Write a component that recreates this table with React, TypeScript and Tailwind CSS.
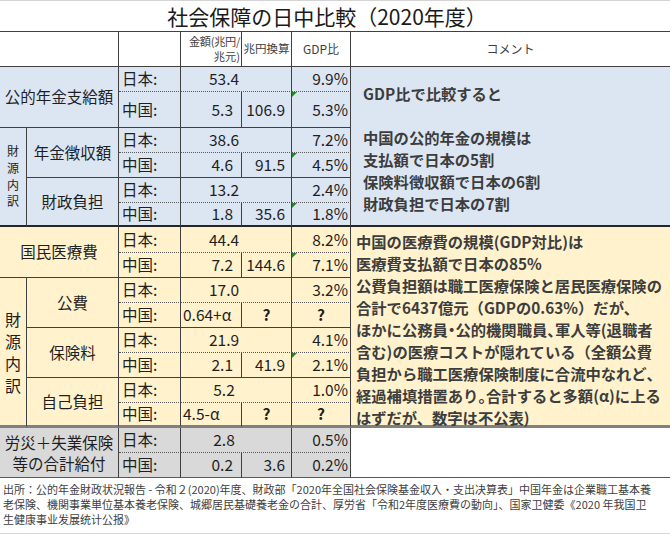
import React from "react";

const RS: Record<number, string> = {
  2: "row-start-2",
  3: "row-start-3",
  4: "row-start-4",
  5: "row-start-5",
  6: "row-start-6",
  7: "row-start-7",
  8: "row-start-8",
  9: "row-start-9",
  10: "row-start-10",
  11: "row-start-11",
  12: "row-start-12",
  13: "row-start-13",
  14: "row-start-14",
  15: "row-start-15",
  16: "row-start-16",
  17: "row-start-17",
};

const BR = "border-r border-r-[#404040]";
const DOT = "border-b border-b-[#5a5a5a] [border-bottom-style:dotted]";
const BOT: Record<string, string> = {
  n: "border-b border-b-[#404040]",
  t1: "border-b-2 border-b-[#262626]",
  t2: "border-b-[3px] border-b-[#808080]",
  last: "border-b border-b-[#595959]",
};

const BLUE = "bg-[#dce6f2]";
const YEL = "bg-[#fff2cc]";
const GRAY = "bg-[#d9d9d9]";

type PairProps = {
  r: number;
  jp: string;
  jpGdp: string;
  cn: string;
  cnConv: string;
  cnGdp: string;
  bg: string;
  bottom: string;
  tri?: boolean;
  q?: boolean;
};

function Tri() {
  return (
    <span className="absolute left-0 top-0 h-0 w-0 border-t-[5px] border-t-[#1f8a1f] border-r-[5px] border-r-transparent" />
  );
}

function Pair({ r, jp, jpGdp, cn, cnConv, cnGdp, bg, bottom, tri, q }: PairProps) {
  const b = BOT[bottom];
  const r2 = r + 1;
  return (
    <>
      <div className={`${RS[r]} col-start-3 ${bg} ${BR} ${DOT} flex items-center pl-[3px]`}>日本:</div>
      <div className={`${RS[r]} col-start-4 col-span-2 ${bg} ${BR} ${DOT} flex items-center justify-center pr-[24px]`}>{jp}</div>
      <div className={`${RS[r]} col-start-6 ${bg} ${BR} ${DOT} flex items-center justify-end pr-[2px]`}>{jpGdp}</div>
      <div className={`${RS[r2]} col-start-3 ${bg} ${BR} ${b} flex items-center pl-[3px]`}>中国:</div>
      {q ? (
        <>
          <div className={`${RS[r2]} col-start-4 ${bg} ${BR} ${b} flex items-center justify-start pl-[2px]`}>{cn}</div>
          <div className={`${RS[r2]} col-start-5 ${bg} ${BR} ${b} flex items-center justify-center font-bold`}>?</div>
          <div className={`${RS[r2]} col-start-6 ${bg} ${BR} ${b} flex items-center justify-center font-bold`}>?</div>
        </>
      ) : (
        <>
          <div className={`${RS[r2]} col-start-4 ${bg} ${BR} ${b} flex items-center justify-end pr-[8px]`}>{cn}</div>
          <div className={`${RS[r2]} col-start-5 ${bg} ${BR} ${b} flex items-center justify-end pr-[6px]`}>{cnConv}</div>
          <div className={`${RS[r2]} col-start-6 ${bg} ${BR} ${b} relative flex items-center justify-end pr-[2px]`}>
            {tri && <Tri />}
            {cnGdp}
          </div>
        </>
      )}
    </>
  );
}

const P = ({ children }: { children: React.ReactNode }) => (
  <span className="[font-feature-settings:'palt']">{children}</span>
);

export default function App() {
  return (
    <div className="w-[670px] h-[534px] overflow-hidden bg-white text-[#1f1f1f] [font-family:'Noto_Sans_CJK_JP','Noto_Sans',sans-serif]">
      <div className="h-[31px] border-t border-t-[#d4d4d4] flex items-center justify-center pr-[16px] text-[21px] leading-none text-[#1a1a1a]">
        社会保障の日中比較（2020年度）
      </div>
      <div className="grid grid-cols-[27px_92px_62px_61px_50px_59px_319px] grid-rows-[36px_25px_36px_25px_25px_25px_24px_26px_25px_25px_25px_25px_25px_25px_25px_25px_25px] text-[15.5px] leading-none">
        {/* header */}
        <div className={`row-start-1 col-start-1 col-span-2 ${BR} border-y border-y-[#404040]`} />
        <div className={`row-start-1 col-start-3 ${BR} border-y border-y-[#404040]`} />
        <div className={`row-start-1 col-start-4 ${BR} border-y border-y-[#404040] flex flex-col items-end justify-center pr-[1px] text-[11.2px] leading-[15px] text-[#404040] whitespace-nowrap overflow-hidden`}>
          <span className="tracking-[-0.3px]">金額(兆円/</span>
          <span>兆元)</span>
        </div>
        <div className={`row-start-1 col-start-5 ${BR} border-y border-y-[#404040] flex items-center justify-center text-[11.5px] text-[#404040] whitespace-nowrap`}>
          兆円換算
        </div>
        <div className={`row-start-1 col-start-6 ${BR} border-y border-y-[#404040] flex items-center justify-center text-[12px] text-[#404040]`}>
          GDP比
        </div>
        <div className="row-start-1 col-start-7 border-y border-y-[#404040] flex items-center justify-center text-[12px] text-[#404040]">
          コメント
        </div>

        {/* left labels */}
        <div className={`row-start-2 row-span-2 col-start-1 col-span-2 ${BLUE} ${BR} ${BOT.n} flex items-center justify-center`}>
          公的年金支給額
        </div>
        <div className={`row-start-4 row-span-4 col-start-1 ${BLUE} ${BR} ${BOT.t1} flex flex-col items-center justify-center text-[12px] leading-[16.7px]`}>
          <span>財</span>
          <span>源</span>
          <span>内</span>
          <span>訳</span>
        </div>
        <div className={`row-start-4 row-span-2 col-start-2 ${BLUE} ${BR} ${BOT.n} flex items-center justify-center`}>
          年金徴収額
        </div>
        <div className={`row-start-6 row-span-2 col-start-2 ${BLUE} ${BR} ${BOT.t1} flex items-center justify-center`}>
          財政負担
        </div>
        <div className={`row-start-8 row-span-2 col-start-1 col-span-2 ${YEL} ${BR} ${BOT.n} flex items-center justify-center`}>
          国民医療費
        </div>
        <div className={`row-start-10 row-span-6 col-start-1 ${YEL} ${BR} ${BOT.t2} flex flex-col items-center justify-center text-[16px] leading-[22px]`}>
          <span>財</span>
          <span>源</span>
          <span>内</span>
          <span>訳</span>
        </div>
        <div className={`row-start-10 row-span-2 col-start-2 ${YEL} ${BR} ${BOT.n} flex items-center justify-center`}>
          公費
        </div>
        <div className={`row-start-12 row-span-2 col-start-2 ${YEL} ${BR} ${BOT.n} flex items-center justify-center`}>
          保険料
        </div>
        <div className={`row-start-14 row-span-2 col-start-2 ${YEL} ${BR} ${BOT.t2} flex items-center justify-center`}>
          自己負担
        </div>
        <div className={`row-start-16 row-span-2 col-start-1 col-span-2 ${GRAY} ${BR} ${BOT.last} flex flex-col items-center justify-center leading-[21px] whitespace-nowrap`}>
          <span>労災＋失業保険</span>
          <span>等の合計給付</span>
        </div>

        {/* data */}
        <Pair r={2} jp="53.4" jpGdp="9.9%" cn="5.3" cnConv="106.9" cnGdp="5.3%" bg={BLUE} bottom="n" tri />
        <Pair r={4} jp="38.6" jpGdp="7.2%" cn="4.6" cnConv="91.5" cnGdp="4.5%" bg={BLUE} bottom="n" tri />
        <Pair r={6} jp="13.2" jpGdp="2.4%" cn="1.8" cnConv="35.6" cnGdp="1.8%" bg={BLUE} bottom="t1" tri />
        <Pair r={8} jp="44.4" jpGdp="8.2%" cn="7.2" cnConv="144.6" cnGdp="7.1%" bg={YEL} bottom="n" tri />
        <Pair r={10} jp="17.0" jpGdp="3.2%" cn="0.64+α" cnConv="" cnGdp="" bg={YEL} bottom="n" q />
        <Pair r={12} jp="21.9" jpGdp="4.1%" cn="2.1" cnConv="41.9" cnGdp="2.1%" bg={YEL} bottom="n" tri />
        <Pair r={14} jp="5.2" jpGdp="1.0%" cn="4.5-α" cnConv="" cnGdp="" bg={YEL} bottom="t2" q />
        <Pair r={16} jp="2.8" jpGdp="0.5%" cn="0.2" cnConv="3.6" cnGdp="0.2%" bg={GRAY} bottom="last" />

        {/* comments */}
        <div className={`row-start-2 row-span-6 col-start-7 ${BLUE} ${BOT.t1} pl-[12px] pt-[15px] text-[15.3px] leading-[22px] font-bold text-[#3d3d3d] whitespace-nowrap`}>
          <div>GDP比で比較すると</div>
          <div>&nbsp;</div>
          <div>中国の公的年金の規模は</div>
          <div>支払額で日本の5割</div>
          <div>保険料徴収額で日本の6割</div>
          <div>財政負担で日本の7割</div>
        </div>
        <div className={`row-start-8 row-span-8 col-start-7 ${YEL} ${BOT.t2} pl-[5px] pt-[3px] text-[15.3px] leading-[22px] font-bold text-[#3d3d3d] whitespace-nowrap`}>
          <div>中国の医療費の規模(GDP対比)は</div>
          <div>医療費支払額で日本の85%</div>
          <div>公費負担額は職工医療保険と居民医療保険の</div>
          <div>合計で6437億元（GDPの0.63%）だが、</div>
          <div>
            ほかに公務員<P>・</P>公的機関職員<P>、</P>軍人等(退職者
          </div>
          <div>含む)の医療コストが隠れている（全額公費</div>
          <div>
            負担から職工医療保険制度に合流中なれど<P>、</P>
          </div>
          <div>
            経過補填措置あり<P>。</P>合計すると多額(α)に上る
          </div>
          <div>はずだが、数字は不公表)</div>
        </div>
        <div className={`row-start-16 row-span-2 col-start-7 bg-white ${BOT.last}`} />
      </div>
      <div className="h-[56px] border-b border-b-[#d4d4d4] pl-[3px] pt-[4px] text-[11px] leading-[15px] text-[#404040] whitespace-nowrap overflow-hidden">
        <div>出所：公的年金財政状況報告 - 令和２(2020)年度、財政部「2020年全国社会保険基金収入・支出决算表」中国年金は企業職工基本養</div>
        <div>老保険、機関事業単位基本養老保険、城郷居民基礎養老金の合計、厚労省「令和2年度医療費の動向」、国家卫健委《2020 年我国卫</div>
        <div>生健康事业发展统计公报》</div>
      </div>
    </div>
  );
}
